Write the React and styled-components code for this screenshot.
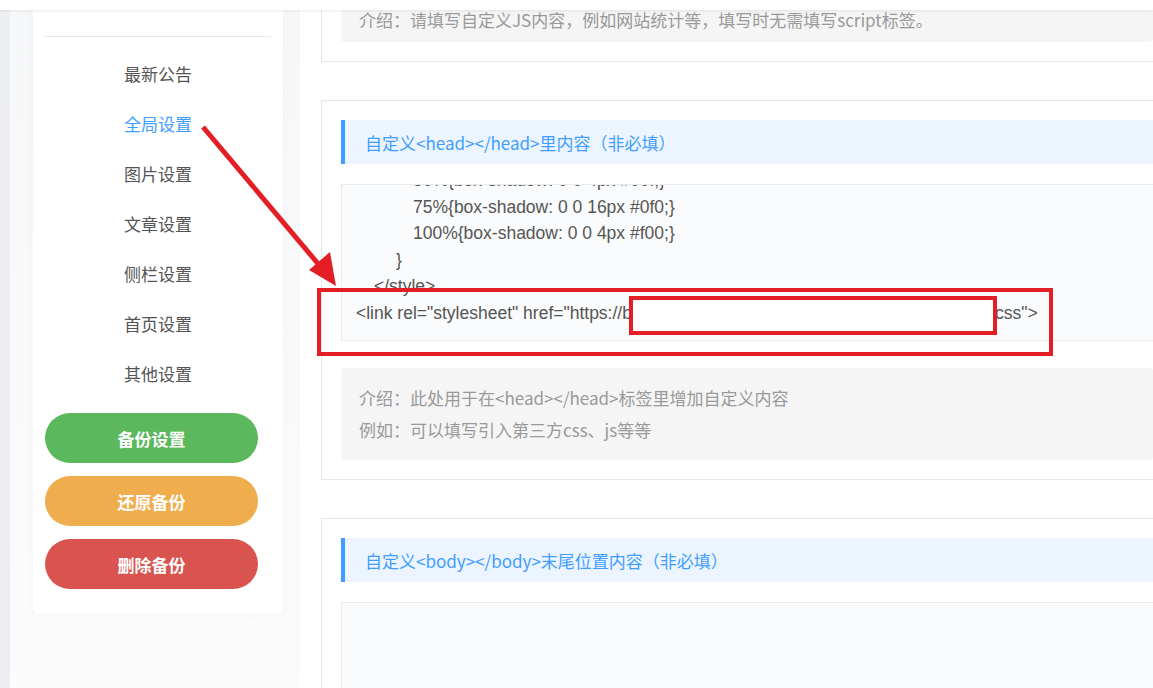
import React from "react";
import styled, { createGlobalStyle } from "styled-components";

const G = createGlobalStyle`
  html,body{margin:0;padding:0;overflow:hidden;background:#fff;}
  body{font-family:"Microsoft YaHei","Noto Sans CJK SC",sans-serif;}
`;
const Page = styled.div`display:flex;height:688px;overflow:hidden;position:relative;background:#fff;`;
const LeftEdge = styled.div`width:10px;background:#eceef2;flex:none;`;
const SideWrap = styled.div`width:290px;flex:none;background:linear-gradient(#f6f7f8,#fbfbfc);padding:0 17px 0 23px;box-sizing:border-box;`;
const Side = styled.div`background:#fff;border-radius:6px;padding:0 12px 12px;margin-top:-20px;box-shadow:0 0 8px rgba(0,0,0,.03);`;
const Logo = styled.div`height:56px;border-bottom:1px solid #e6e8ec;`;
const Menu = styled.div`display:flex;flex-direction:column;padding:12px 0 14px;`;
const Item = styled.div`height:50px;line-height:50px;text-align:center;font-size:17px;color:${p=>p.$active?"#409eff":"#555"};`;
const Btn = styled.div`height:50px;border-radius:25px;background:${p=>p.$c};color:#fff;font-size:17px;font-weight:bold;display:flex;align-items:center;justify-content:center;margin:0 13px 13px 0;`;
const Main = styled.div`flex:1;padding:0 0 0 21px;display:flex;flex-direction:column;gap:38px;margin-top:-27px;`;
const Card = styled.div`border:1px solid #e6e6e6;border-right:none;padding:19px 0 19px 19px;display:flex;flex-direction:column;`;
const Title = styled.div`height:44px;background:#ecf4ff;border-left:4px solid #409eff;color:#409eff;font-size:17px;display:flex;align-items:center;padding-left:20px;margin-bottom:20px;`;
const Code = styled.div`height:${p=>p.$h}px;background:#fafbfc;border:1px solid #e8eaee;border-right:none;overflow:hidden;font-family:"Liberation Sans",Arial,sans-serif;font-size:17.5px;color:#555;position:relative;margin-bottom:27px;`;
const Lines = styled.div`position:absolute;left:14px;bottom:14px;line-height:26.5px;white-space:pre;`;
const Line = styled.div`padding-left:${p=>p.$i||0}px;`;
const Tail = styled.span`position:absolute;left:639px;`;
const Intro = styled.div`background:#f5f5f5;border-radius:4px;padding:${p=>p.$p||"14px 18px"};color:#999;font-size:17px;line-height:32px;`;
const Top = styled.div`position:absolute;top:0;left:0;right:0;height:10px;background:#fff;box-shadow:0 1px 3px rgba(0,0,0,.08);`;
const Over = styled.svg`position:absolute;left:0;top:0;pointer-events:none;`;

export default function App(){
  return <>
    <G/>
    <Page>
      <LeftEdge/>
      <SideWrap>
        <Side>
          <Logo/>
          <Menu>
            {["最新公告","全局设置","图片设置","文章设置","侧栏设置","首页设置","其他设置"].map((t,i)=><Item key={t} $active={i===1}>{t}</Item>)}
          </Menu>
          <Btn $c="#5cb85c">备份设置</Btn>
          <Btn $c="#f0ad4e">还原备份</Btn>
          <Btn $c="#d9534f">删除备份</Btn>
        </Side>
      </SideWrap>
      <Main>
        <Card style={{paddingTop:0}}>
          <Intro $p="30px 18px 6px">介绍：请填写自定义JS内容，例如网站统计等，填写时无需填写script标签。</Intro>
        </Card>
        <Card>
          <Title>自定义&lt;head&gt;&lt;/head&gt;里内容（非必填）</Title>
          <Code $h={155}>
            <Lines>
              <Line $i={57}>50%{"{box-shadow: 0 0 4px #00f;}"}</Line>
              <Line $i={57}>75%{"{box-shadow: 0 0 16px #0f0;}"}</Line>
              <Line $i={57}>100%{"{box-shadow: 0 0 4px #f00;}"}</Line>
              <Line $i={40}>{"}"}</Line>
              <Line $i={18}>{"</style>"}</Line>
              <Line>{"<link rel=\"stylesheet\" href=\"https://b"}<Tail>{"css\">"}</Tail></Line>
            </Lines>
          </Code>
          <Intro>介绍：此处用于在&lt;head&gt;&lt;/head&gt;标签里增加自定义内容<br/>例如：可以填写引入第三方css、js等等</Intro>
        </Card>
        <Card>
          <Title>自定义&lt;body&gt;&lt;/body&gt;末尾位置内容（非必填）</Title>
          <Code $h={150}/>
        </Card>
      </Main>
      <Top/>
      <Over width="1153" height="688">
        <line x1="203" y1="127" x2="325" y2="272" stroke="#e31e24" strokeWidth="5"/>
        <polygon points="336,286 309,270 330,252" fill="#e31e24"/>
        <rect x="319" y="290" width="732" height="64" fill="none" stroke="#e31e24" strokeWidth="4"/>
        <rect x="631" y="298" width="364" height="35" fill="#fff" stroke="#e31e24" strokeWidth="4"/>
      </Over>
    </Page>
  </>;
}
